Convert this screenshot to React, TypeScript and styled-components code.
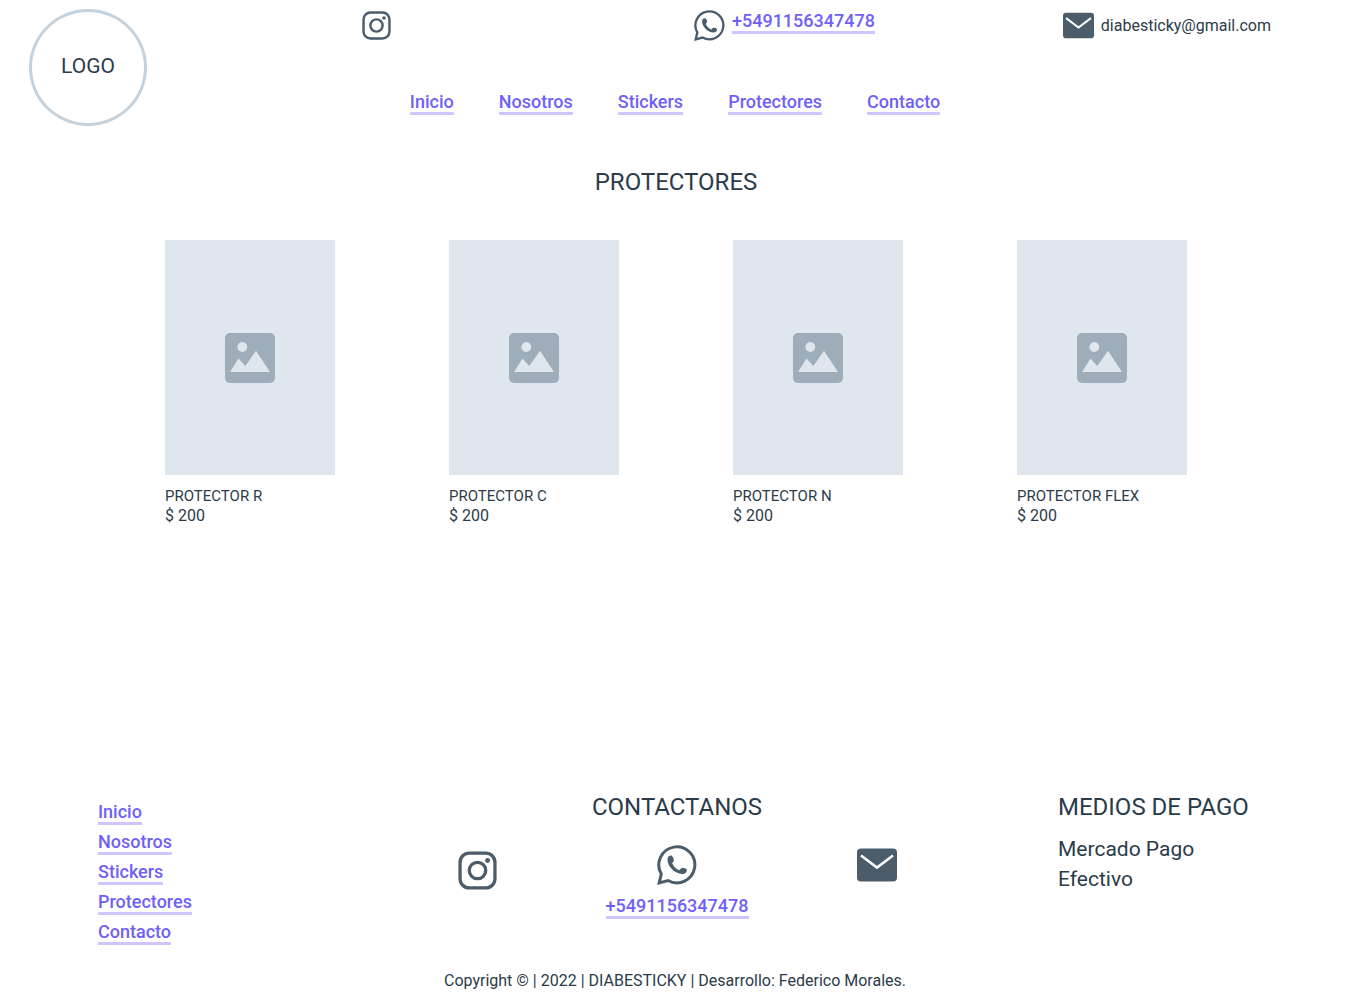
import React from "react";
import styled, { createGlobalStyle } from "styled-components";

const GlobalStyle = createGlobalStyle`
  *, *::before, *::after { box-sizing: border-box; }
  body {
    margin: 0;
    background: #ffffff;
    color: #2c3b49;
    font-family: Roboto, "Liberation Sans", sans-serif;
    font-size: 16px;
    line-height: 20px;
  }
  h1, h2, h3, p, ul { margin: 0; padding: 0; }
  ul { list-style: none; }
`;

const Page = styled.div`
  display: flex;
  flex-direction: column;
  min-height: 100vh;
`;

const Header = styled.header`
  display: grid;
  grid-template-columns: 118px 1fr 118px;
  grid-template-rows: 81px auto;
  padding: 9px 29px 0;
`;

const Logo = styled.div`
  grid-row: 1 / 3;
  display: flex;
  align-items: center;
  justify-content: center;
  height: 117px;
  padding-bottom: 4px;
  border: 3px solid #c5d1db;
  border-radius: 50%;
  font-size: 21px;
  line-height: 30px;
`;

const ContactBar = styled.address`
  grid-column: 2 / 4;
  display: grid;
  grid-template-columns: 9fr 10fr 7fr;
  padding-left: 215px;
  font-style: normal;
`;

const ContactItem = styled.div`
  display: flex;
  align-items: flex-start;
  gap: 7px;
`;

const Email = styled.span`
  padding-top: 7px;
`;

const IconLink = styled.a<{ $height?: number }>`
  display: flex;
  align-items: center;
  height: ${(p) => p.$height ?? 32}px;
  color: #4b5c6a;
`;

const TextLink = styled.a`
  display: inline-block;
  padding-top: 2px;
  border-bottom: 3px solid #cfc6ff;
  color: #6f61f6;
  font-size: 18px;
  font-weight: 500;
  line-height: 20px;
  text-decoration: none;
`;

const Nav = styled.nav`
  grid-column: 2;
  display: flex;
  align-items: flex-start;
  justify-content: center;
  gap: 45px;
`;

const Main = styled.main`
  padding: 41px 163px 48px 165px;
`;

const Heading = styled.h2`
  font-size: 24px;
  font-weight: 400;
  line-height: 30px;
`;

const PageTitle = styled(Heading)`
  text-align: center;
`;

const Products = styled.ul`
  display: grid;
  grid-template-columns: repeat(4, 170px);
  justify-content: space-between;
  margin-top: 43px;
`;

const Thumbnail = styled.div`
  display: flex;
  align-items: center;
  justify-content: center;
  height: 235px;
  margin-bottom: 11px;
  background: #dfe6ee;
`;

const ProductName = styled.h3`
  font-size: 15px;
  font-weight: 400;
  line-height: 20px;
`;

const Footer = styled.footer`
  display: grid;
  grid-template-columns: 1fr 600px 1fr;
  margin-top: auto;
  padding: 0 94px 0 98px;
`;

const FooterNav = styled.nav`
  display: flex;
  flex-direction: column;
  align-items: flex-start;
  gap: 5px;
  padding-top: 8px;
`;

const ContactSection = styled.section`
  text-align: center;
`;

const ContactGrid = styled.div`
  display: grid;
  grid-template-columns: repeat(3, 1fr);
  justify-items: center;
  align-items: start;
  margin-top: 22px;
`;

const PhoneContact = styled.div`
  display: flex;
  flex-direction: column;
  align-items: center;
  gap: 8px;
`;

const Payment = styled.section`
  justify-self: end;
  min-width: 198px;
`;

const PaymentList = styled.ul`
  margin-top: 12px;
  font-size: 21px;
  line-height: 30px;
  white-space: nowrap;
`;

const Copyright = styled.p`
  grid-column: 1 / 4;
  padding: 26px 4px 9px 0;
  text-align: center;
`;

const Instagram = ({ size }: { size: number }) => (
  <svg width={size} height={size} viewBox="0 0 38 38" fill="none" stroke="currentColor" strokeWidth="3.2" aria-hidden="true">
    <rect x="2" y="2" width="34" height="34" rx="9" />
    <circle cx="19" cy="19" r="8" />
    <circle cx="28.8" cy="9.2" r="2.4" fill="currentColor" stroke="none" />
  </svg>
);

const Whatsapp = ({ size }: { size: number }) => (
  <svg width={size} height={size} viewBox="0 0 40 40" fill="none" aria-hidden="true">
    <path
      d="M4.3 28.9A18 18 0 1 1 11 35.5L2.2 37.9Z"
      stroke="currentColor"
      strokeWidth="3"
      strokeLinejoin="miter"
    />
    <path
      d="M10.6 13.6C11.2 11 13.2 10 15 11C16.3 12 17 14.2 16.8 15.6C16.6 16.8 15.6 17.4 15.2 18.2C16.6 21.3 19 23.8 22.2 25.2C23.2 24.8 23.6 23.2 25 22.9C26.8 22.7 29 23.6 29.9 24.8C30.2 27 28 29.2 25 29.1C17 28.8 9.4 20 10.6 13.6Z"
      fill="currentColor"
    />
  </svg>
);

const Mail = ({ size }: { size: number }) => (
  <svg width={size} height={size} viewBox="0 0 40 40" fill="none" aria-hidden="true">
    <rect y="3.5" width="40" height="33" rx="4" fill="currentColor" />
    <path d="M4 10.5L20 22.5L36 10.5" stroke="#ffffff" strokeWidth="2.6" />
  </svg>
);

const Picture = () => (
  <svg width="50" height="50" viewBox="0 0 50 50" aria-hidden="true">
    <rect width="50" height="50" rx="5" fill="#9eadb9" />
    <circle cx="17.3" cy="14" r="4.9" fill="#dfe6ee" />
    <path d="M5.5 38.2L13.5 25.6L20.3 33L31 17.7L44.5 38.2V39H5.5Z" fill="#dfe6ee" />
  </svg>
);

const pages = ["Inicio", "Nosotros", "Stickers", "Protectores", "Contacto"];
const products = ["PROTECTOR R", "PROTECTOR C", "PROTECTOR N", "PROTECTOR FLEX"];
const phone = "+5491156347478";
const email = "diabesticky@gmail.com";

const PageLinks = () => (
  <>
    {pages.map((name) => (
      <TextLink key={name} href={`#${name.toLowerCase()}`}>{name}</TextLink>
    ))}
  </>
);

export default function App() {
  return (
    <Page>
      <GlobalStyle />
      <Header>
        <Logo>LOGO</Logo>
        <ContactBar>
          <ContactItem>
            <IconLink href="#instagram" aria-label="Instagram"><Instagram size={29} /></IconLink>
          </ContactItem>
          <ContactItem>
            <IconLink href="#whatsapp" aria-label="WhatsApp"><Whatsapp size={31} /></IconLink>
            <TextLink href={`tel:${phone}`}>{phone}</TextLink>
          </ContactItem>
          <ContactItem>
            <IconLink href={`mailto:${email}`} aria-label="Email"><Mail size={31} /></IconLink>
            <Email>{email}</Email>
          </ContactItem>
        </ContactBar>
        <Nav aria-label="Principal"><PageLinks /></Nav>
      </Header>

      <Main>
        <PageTitle as="h1">PROTECTORES</PageTitle>
        <Products>
          {products.map((name) => (
            <li key={name}>
              <Thumbnail><Picture /></Thumbnail>
              <ProductName>{name}</ProductName>
              <p>$ 200</p>
            </li>
          ))}
        </Products>
      </Main>

      <Footer>
        <FooterNav aria-label="Pie de página"><PageLinks /></FooterNav>
        <ContactSection>
          <Heading>CONTACTANOS</Heading>
          <ContactGrid>
            <IconLink $height={52} href="#instagram" aria-label="Instagram"><Instagram size={39} /></IconLink>
            <PhoneContact>
              <IconLink $height={42} href="#whatsapp" aria-label="WhatsApp"><Whatsapp size={40} /></IconLink>
              <TextLink href={`tel:${phone}`}>{phone}</TextLink>
            </PhoneContact>
            <IconLink $height={42} href={`mailto:${email}`} aria-label="Email"><Mail size={40} /></IconLink>
          </ContactGrid>
        </ContactSection>
        <Payment>
          <Heading>MEDIOS DE PAGO</Heading>
          <PaymentList>
            <li>Mercado Pago</li>
            <li>Efectivo</li>
          </PaymentList>
        </Payment>
        <Copyright>Copyright © | 2022 | DIABESTICKY | Desarrollo: Federico Morales.</Copyright>
      </Footer>
    </Page>
  );
}
